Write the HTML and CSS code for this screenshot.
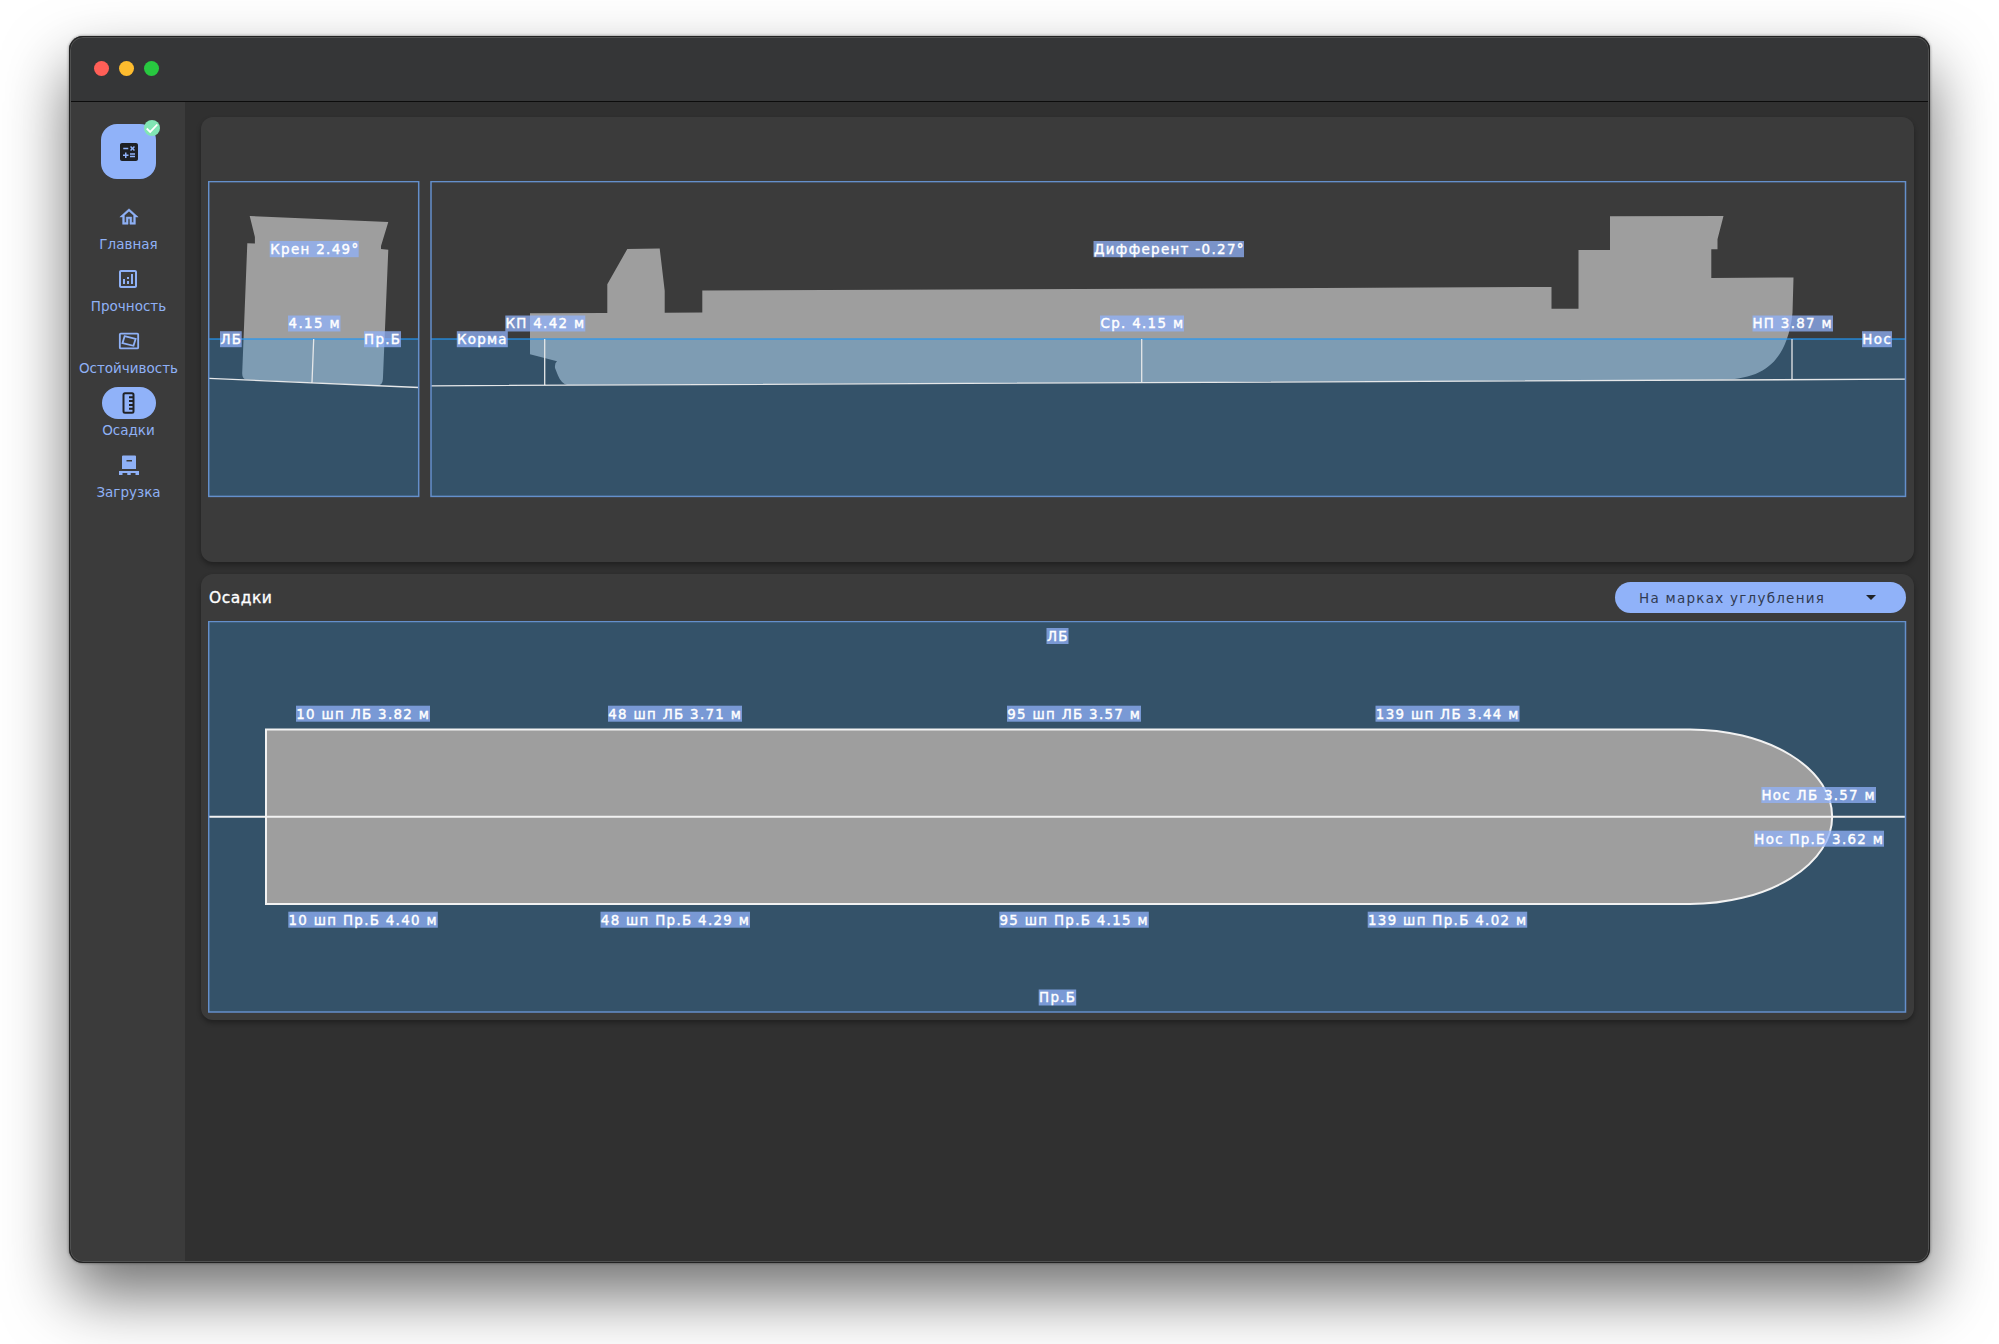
FILE: index.html
```html
<!DOCTYPE html>
<html lang="ru">
<head>
<meta charset="utf-8">
<title>Осадки</title>
<link rel="stylesheet" href="styles.css">
</head>
<body>
<div class="window">
  <header class="titlebar"><i class="dot red"></i><i class="dot yellow"></i><i class="dot green"></i></header>
  <div class="body">
    <nav class="rail">
      <div class="fab">
        <svg class="calc" width="24" height="24" viewBox="0 0 24 24"><path fill="#1e2024" fill-rule="evenodd" d="M19 3H5c-1.1 0-2 .9-2 2v14c0 1.1.9 2 2 2h14c1.1 0 2-.9 2-2V5c0-1.1-.9-2-2-2zm-5.970 4.060L14.090 6l1.410 1.410L16.910 6l1.060 1.060-1.410 1.410 1.410 1.410-1.060 1.060-1.410-1.410-1.410 1.410-1.060-1.060 1.410-1.410-1.410-1.410zM6.250 7.720h5v1.500h-5v-1.500zM11.500 16h-2v2H8v-2H6v-1.500h2v-2h1.500v2h2V16zm6.500 1.250h-5v-1.500h5v1.500zm0-2.500h-5v-1.500h5v1.500z"/></svg>
        <svg class="badge" width="16" height="16" viewBox="0 0 16 16"><circle cx="8" cy="8" r="8" fill="#81e6b4"/><path d="M2.700 8.500l3.500 3.400L13.300 4.500" fill="none" stroke="#fff" stroke-width="1.800"/></svg>
      </div>
      <a class="item"><span class="pill"><svg width="22" height="22" viewBox="0 0 24 24"><path fill="currentColor" stroke="currentColor" stroke-width=".5" d="M12 5.690l5 4.500V18h-2v-6H9v6H7v-7.810l5-4.500M12 3L2 12h3v8h6v-6h2v6h6v-8h3L12 3z"/></svg></span><span>Главная</span></a>
      <a class="item"><span class="pill"><svg width="24" height="24" viewBox="0 0 24 24"><path fill="currentColor" d="M19 3H5c-1.100 0-2 .9-2 2v14c0 1.100.9 2 2 2h14c1.100 0 2-.9 2-2V5c0-1.100-.9-2-2-2zm0 16H5V5h14v14zM7 12h2v5H7zM15 7h2v10h-2zM11 14h2v3h-2zM11 10h2v2h-2z"/></svg></span><span>Прочность</span></a>
      <a class="item"><span class="pill"><svg width="22" height="22" viewBox="0 0 24 24" fill="none" stroke="currentColor" stroke-width="2"><rect x="2" y="4" width="20" height="16" rx="1"/><path d="M7.200 6.800l12 3-2.300 7.400-12-3z"/></svg></span><span>Остойчивость</span></a>
      <a class="item active"><span class="pill"><svg width="24" height="24" viewBox="0 0 24 24" fill="none" stroke="currentColor" stroke-width="2"><rect x="6.500" y="2.300" width="10" height="19.400" rx="1.500"/><path d="M12 6.200H16.500M12 10H16.500M12 13.900H16.500M12 17.800H16.500"/></svg></span><span>Осадки</span></a>
      <a class="item"><span class="pill"><svg width="24" height="24" viewBox="0 0 24 24"><path fill="currentColor" fill-rule="evenodd" d="M6 2.500h12q1 0 1 1V16H5V3.500q0-1 1-1zm3.500 4.500v1.500h5.500V7zM2 18h20v4h-3.500v-2h-4.800v2h-3.400v-2H5.500v2H2z"/></svg></span><span>Загрузка</span></a>
    </nav>
    <main class="content">
      <section class="card views">
        <svg width="212" height="317" viewBox="208 181 212 317">
          <path class="hull" d="M249.700 216L388.300 222 381 246V249L388.300 249.700 382.900 379Q382.500 385.800 377 385.500L247 379.700Q242 379.500 242.200 373L247.300 243.200 254.900 243.600V237z"/>
          <path class="sea" d="M209 339H419V497H209z"/>
          <path class="waterline" d="M209 339H419"/>
          <path class="keel" d="M209 378.400L419 387.500M313.700 339L312 382.500"/>
          <rect class="frame" x="208.700" y="181.600" width="210" height="314.800"/>
          <g class="tag"><rect x="269.700" y="241" width="89" height="16.200"/><text x="270.200" y="253.700" textLength="88">Крен 2.49°</text>
          <rect x="288" y="315.500" width="52.500" height="16"/><text x="288.500" y="328.300" textLength="51">4.15 м</text>
          <rect x="220" y="331.200" width="21.700" height="16"/><text x="220.500" y="343.900" textLength="20.500">ЛБ</text>
          <rect x="364" y="331.200" width="37" height="16"/><text x="364" y="343.900" textLength="36">Пр.Б</text></g>
        </svg>
        <svg width="1477" height="317" viewBox="430 181 1477 317">
          <path class="hull" d="M530 313.300L607.300 313V284.300L627.300 249 659.700 248.500 664.700 290.700V312.800L702.300 312.600V290.500L1551.500 287V308.700H1578.500V250H1610V216.300L1723.500 216 1717.500 239.300V249.300H1711.300V278L1793.500 277.500 1792.500 313Q1791 328 1786.500 340C1778 363 1762 379 1722 379.800L567 385Q561 383 558 375.500L555 368Q554.500 363 557 361.300L530 354.300z"/>
          <path class="sea" d="M431 339H1905.500V497H431z"/>
          <path class="waterline" d="M431 339H1905"/>
          <path class="keel" d="M431 385.800L1905 379.200M544.700 339V385.300M1141.700 339V382.500M1792 339V379.500"/>
          <rect class="frame" x="431" y="181.600" width="1474.500" height="314.800"/>
          <g class="tag"><rect x="1093.500" y="241" width="150.500" height="16.200"/><text x="1094" y="253.700" textLength="149.500">Дифферент -0.27°</text>
          <rect x="505.300" y="315.500" width="80" height="16"/><text x="505.500" y="328.300" textLength="78.500">КП 4.42 м</text>
          <rect x="456.800" y="331.200" width="51" height="16"/><text x="457" y="343.900" textLength="49.500">Корма</text>
          <rect x="1100" y="315.500" width="84" height="16"/><text x="1100.500" y="328.300" textLength="82.500">Ср. 4.15 м</text>
          <rect x="1752.500" y="315.500" width="80.500" height="16"/><text x="1752.500" y="328.300" textLength="79">НП 3.87 м</text>
          <rect x="1862" y="331.200" width="30" height="16"/><text x="1862.300" y="343.900" textLength="28.500">Нос</text></g>
        </svg>
      </section>
      <section class="card drafts">
        <div class="head"><h2>Осадки</h2><button class="select"><span>На марках углубления</span><i class="caret"></i></button></div>
        <svg width="1699" height="392" viewBox="208 621 1699 392">
          <rect class="sea" x="209" y="622" width="1696.500" height="390"/>
          <path class="deck" d="M266 729.400H1690A142.300 87.300 0 0 1 1690 904H266z"/>
          <path class="axis" d="M208.500 816.800H1906"/>
          <rect class="frame" x="208.700" y="621.500" width="1696.800" height="390.500"/>
          <g class="tag"><rect x="1046.500" y="628" width="22" height="16"/><text x="1047" y="641" textLength="20.500">ЛБ</text>
          <rect x="296" y="705.700" width="134" height="16"/><text x="296.300" y="718.700" textLength="132.500">10 шп ЛБ 3.82 м</text>
          <rect x="608" y="705.700" width="134" height="16"/><text x="608.300" y="718.700" textLength="132.500">48 шп ЛБ 3.71 м</text>
          <rect x="1007" y="705.700" width="134" height="16"/><text x="1007.300" y="718.700" textLength="132.500">95 шп ЛБ 3.57 м</text>
          <rect x="1375.500" y="705.700" width="144" height="16"/><text x="1375.800" y="718.700" textLength="142.500">139 шп ЛБ 3.44 м</text>
          <rect x="1761.300" y="787" width="114.700" height="16"/><text x="1761.500" y="800" textLength="113">Нос ЛБ 3.57 м</text>
          <rect x="1754" y="830.700" width="130" height="16"/><text x="1754.300" y="843.700" textLength="128.500">Нос Пр.Б 3.62 м</text>
          <rect x="288.300" y="911.700" width="149.500" height="16"/><text x="288.500" y="924.700" textLength="148">10 шп Пр.Б 4.40 м</text>
          <rect x="600.500" y="911.700" width="149.500" height="16"/><text x="600.800" y="924.700" textLength="148">48 шп Пр.Б 4.29 м</text>
          <rect x="999.300" y="911.700" width="149.500" height="16"/><text x="999.500" y="924.700" textLength="148">95 шп Пр.Б 4.15 м</text>
          <rect x="1367.700" y="911.700" width="159.500" height="16"/><text x="1368" y="924.700" textLength="158">139 шп Пр.Б 4.02 м</text>
          <rect x="1038.700" y="989.500" width="37.500" height="16"/><text x="1039" y="1002.300" textLength="36">Пр.Б</text></g>
        </svg>
      </section>
    </main>
  </div>
</div>
</body>
</html>
```
FILE: styles.css
```css
* { box-sizing: border-box; }
html { overflow: hidden; }
body {
  margin: 0; padding: 36px 69px 0; height: 1344px;
  background: #fff; color: #fff;
  font-family: "DejaVu Sans", sans-serif; overflow: hidden;
}
.window {
  width: 1861px; height: 1227px; border-radius: 14px;
  overflow: hidden; background: #303030; position: relative;
  box-shadow: 0 32px 64px rgba(0,0,0,.56), 0 0 3px rgba(0,0,0,.5);
}
.window::after {
  content: ""; position: absolute; inset: 0; border-radius: 14px;
  border: 1px solid #222; box-shadow: inset 0 0 0 1px #505151; pointer-events: none;
}
.titlebar {
  height: 66px; background: #353637; border-bottom: 1px solid #0c0c0c;
  display: flex; align-items: center; gap: 10px; padding-left: 25px;
}
.dot { width: 15px; height: 15px; border-radius: 50%; }
.red { background: #ff5f57; }
.yellow { background: #febc2e; }
.green { background: #28c840; }
.body { display: flex; height: 1161px; }
.rail {
  width: 116px; background: #3b3b3b; padding: 22px 0 0 3px;
  display: flex; flex-direction: column; align-items: center;
}
.fab {
  width: 55px; height: 55px; border-radius: 16px; background: #90b2f9;
  display: flex; align-items: center; justify-content: center;
  position: relative; margin-bottom: 22px;
}
.badge { position: absolute; right: -4px; top: -4px; }
.item {
  height: 62px; display: flex; flex-direction: column; align-items: center;
  font-size: 13.5px; line-height: 16px;
  color: #8fb1f6; gap: 3px;
}
.pill { width: 54px; height: 32px; border-radius: 16px; display: flex; align-items: center; justify-content: center; }
.active .pill { background: #90b2f9; color: #202226; }
.content { flex: 1; padding: 15px 16px; display: flex; flex-direction: column; gap: 12px; }
.card { background: #3b3b3b; border-radius: 12px; box-shadow: 0 3px 5px rgba(0,0,0,.32); }
.card svg { display: block; }
.views { height: 445px; padding: 64px 7px; display: flex; gap: 10px; }
.drafts { height: 446px; padding: 8px 7px 7px; }
.head { height: 39px; display: flex; justify-content: space-between; align-items: flex-start; }
h2 { margin: 0 0 0 1px; font-size: 15.500px; font-weight: 400; line-height: 32px; letter-spacing: .5px; -webkit-text-stroke: .35px; }
.select {
  width: 291px; height: 31px; margin-right: 1px; border: 0; border-radius: 16px;
  background: #90b2f9; color: #303b52; padding: 0 30px 0 24px;
  display: flex; align-items: center; justify-content: space-between;
  font: 13.500px "DejaVu Sans", sans-serif; letter-spacing: 1.250px;
}
.caret { border: 5px solid transparent; border-top-color: #202226; border-bottom: 0; }
.hull { fill: #9e9e9e; }
.sea { fill: #2196f3; fill-opacity: .25; }
.waterline { stroke: #2196f3; stroke-opacity: .6; stroke-width: 1.800; }
.keel { fill: none; stroke: #e5e7e9; stroke-width: 1.300; }
.frame { fill: none; stroke: #648fcb; stroke-width: 1.500; }
.deck { fill: #9e9e9e; stroke: #f2f2f2; stroke-width: 2; }
.axis { stroke: #f2f2f2; stroke-width: 2; }
.tag rect { fill: #90b2f9; fill-opacity: .75; }
.tag text { fill: #fff; font-size: 13.400px; stroke: #fff; stroke-width: .4; }
```
